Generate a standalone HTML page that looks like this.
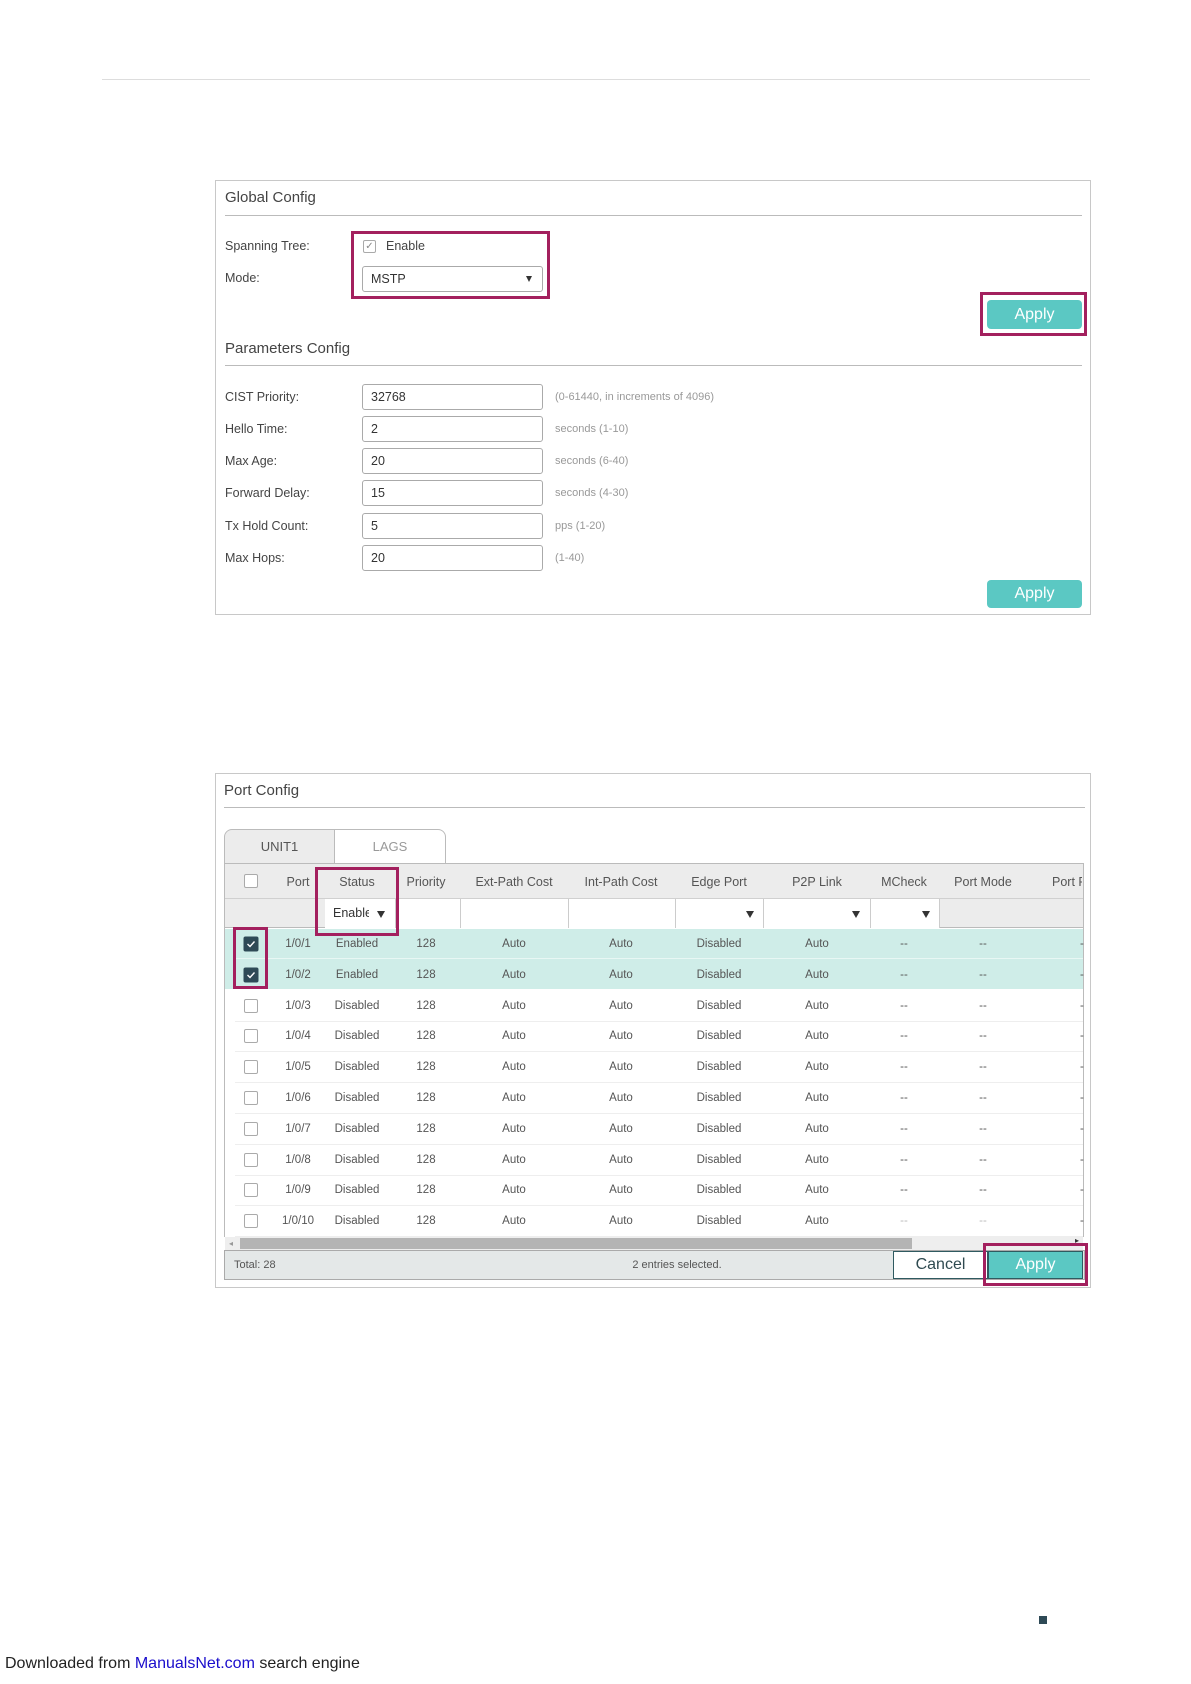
<!DOCTYPE html>
<html><head><meta charset="utf-8"><style>
*{margin:0;padding:0;box-sizing:border-box}
body{width:1191px;height:1684px;background:#fff;position:relative;font-family:"Liberation Sans",sans-serif;color:#333;overflow:hidden}
.a{position:absolute}
.panel{position:absolute;border:1px solid #c8c8c8;background:#fff}
.title{position:absolute;font-size:15px;color:#444}
.hl{position:absolute;height:1px;background:#bbb}
.lbl{position:absolute;font-size:12.5px;color:#444;transform:translateY(-50%)}
.inp{position:absolute;border:1px solid #aaa;border-radius:3px;height:26px;font-size:12.5px;line-height:24px;padding-left:8px;color:#333;background:#fff}
.hint{position:absolute;font-size:11px;color:#999;transform:translateY(-50%)}
.btn{position:absolute;background:#5bc8c3;color:#fff;font-size:16px;text-align:center;border-radius:4px}
.mag{position:absolute;border:3px solid #a3205e}
.c{position:absolute;font-size:11.5px;color:#555;transform:translate(-50%,-50%);white-space:nowrap}
.h{position:absolute;font-size:12.5px;color:#555;transform:translate(-50%,-50%);white-space:nowrap}
.cb{position:absolute;width:14px;height:14px;border:1px solid #aaa;border-radius:2px;background:#fff;transform:translate(-50%,-50%)}
.cbc{position:absolute;width:15px;height:15px;border-radius:2px;background:#2e4a56;transform:translate(-50%,-50%)}
.tri{position:absolute;width:0;height:0;border-left:4px solid transparent;border-right:4px solid transparent;border-top:7px solid #333}
</style></head><body>
<div class="a" style="left:102px;top:79px;width:988px;height:1px;background:#ddd"></div>

<div class="panel" style="left:215px;top:180px;width:876px;height:435px"></div>
<div class="title" style="left:225px;top:189px">Global Config</div>
<div class="hl" style="left:225px;top:215px;width:857px"></div>
<div class="lbl" style="left:225px;top:246px">Spanning Tree:</div>
<div class="lbl" style="left:225px;top:278px">Mode:</div>
<div class="a" style="left:363px;top:240px;width:13px;height:13px;border:1px solid #aaa;border-radius:2px;font-size:10px;line-height:11px;text-align:center;color:#888">✓</div>
<div class="lbl" style="left:386px;top:246px">Enable</div>
<div class="inp" style="left:362px;top:266px;width:181px">MSTP</div>
<div class="tri" style="left:526px;top:276px;border-top-width:6px;border-left-width:3px;border-right-width:3px"></div>
<div class="mag" style="left:351px;top:231px;width:199px;height:68px"></div>
<div class="btn" style="left:987px;top:300px;width:95px;height:29px;line-height:29px">Apply</div>
<div class="mag" style="left:980px;top:292px;width:107px;height:44px"></div>
<div class="title" style="left:225px;top:340px">Parameters Config</div>
<div class="hl" style="left:225px;top:365px;width:857px"></div>

<div class="lbl" style="left:225px;top:397px">CIST Priority:</div>
<div class="inp" style="left:362px;top:384px;width:181px">32768</div>
<div class="hint" style="left:555px;top:397px">(0-61440, in increments of 4096)</div>
<div class="lbl" style="left:225px;top:429px">Hello Time:</div>
<div class="inp" style="left:362px;top:416px;width:181px">2</div>
<div class="hint" style="left:555px;top:429px">seconds (1-10)</div>
<div class="lbl" style="left:225px;top:461px">Max Age:</div>
<div class="inp" style="left:362px;top:448px;width:181px">20</div>
<div class="hint" style="left:555px;top:461px">seconds (6-40)</div>
<div class="lbl" style="left:225px;top:493px">Forward Delay:</div>
<div class="inp" style="left:362px;top:480px;width:181px">15</div>
<div class="hint" style="left:555px;top:493px">seconds (4-30)</div>
<div class="lbl" style="left:225px;top:526px">Tx Hold Count:</div>
<div class="inp" style="left:362px;top:513px;width:181px">5</div>
<div class="hint" style="left:555px;top:526px">pps (1-20)</div>
<div class="lbl" style="left:225px;top:558px">Max Hops:</div>
<div class="inp" style="left:362px;top:545px;width:181px">20</div>
<div class="hint" style="left:555px;top:558px">(1-40)</div>
<div class="btn" style="left:987px;top:580px;width:95px;height:28px;line-height:28px">Apply</div>

<div class="panel" style="left:215px;top:773px;width:876px;height:515px"></div>
<div class="title" style="left:224px;top:782px">Port Config</div>
<div class="hl" style="left:224px;top:807px;width:861px"></div>
<div class="a" style="left:224px;top:829px;width:111px;height:35px;background:#ececec;border:1px solid #bbb;border-bottom:none;border-radius:8px 0 0 0;font-size:13px;line-height:34px;text-align:center;color:#555">UNIT1</div>
<div class="a" style="left:334px;top:829px;width:112px;height:35px;background:#fff;border:1px solid #bbb;border-bottom:none;border-radius:0 8px 0 0;font-size:13px;line-height:34px;text-align:center;color:#999">LAGS</div>
<div class="a" style="left:224px;top:863px;width:860px;height:374px;border-left:1px solid #bbb;border-right:1px solid #bbb;border-top:1px solid #bbb"></div>
<div class="a" style="left:225px;top:864px;width:858px;height:34px;background:#ececec"></div>
<div class="a" style="left:225px;top:898px;width:858px;height:30px;background:#ececec;border-top:1px solid #d0d0d0;border-bottom:1px solid #bbb"></div>
<div class="a" style="left:325px;top:899px;width:71px;height:29px;background:#fff;border-right:1px solid #ccc"></div>
<div class="a" style="left:333px;top:899px;width:36px;height:29px;overflow:hidden;white-space:nowrap;font-size:12.5px;line-height:29px;color:#333">Enable</div>
<div class="tri" style="left:377px;top:911px"></div>
<div class="a" style="left:396px;top:899px;width:65px;height:29px;background:#fff;border-right:1px solid #ccc"></div>
<div class="a" style="left:461px;top:899px;width:108px;height:29px;background:#fff;border-right:1px solid #ccc"></div>
<div class="a" style="left:569px;top:899px;width:107px;height:29px;background:#fff;border-right:1px solid #ccc"></div>
<div class="a" style="left:676px;top:899px;width:88px;height:29px;background:#fff;border-right:1px solid #ccc"></div>
<div class="tri" style="left:746px;top:911px"></div>
<div class="a" style="left:764px;top:899px;width:107px;height:29px;background:#fff;border-right:1px solid #ccc"></div>
<div class="tri" style="left:852px;top:911px"></div>
<div class="a" style="left:871px;top:899px;width:69px;height:29px;background:#fff;border-right:1px solid #ccc"></div>
<div class="tri" style="left:922px;top:911px"></div>
<div class="cb" style="left:251px;top:881px"></div>
<div class="h" style="left:298px;top:882px">Port</div>
<div class="h" style="left:357px;top:882px">Status</div>
<div class="h" style="left:426px;top:882px">Priority</div>
<div class="h" style="left:514px;top:882px">Ext-Path Cost</div>
<div class="h" style="left:621px;top:882px">Int-Path Cost</div>
<div class="h" style="left:719px;top:882px">Edge Port</div>
<div class="h" style="left:817px;top:882px">P2P Link</div>
<div class="h" style="left:904px;top:882px">MCheck</div>
<div class="h" style="left:983px;top:882px">Port Mode</div>
<div class="h" style="left:1052px;top:882px;transform:translate(0,-50%);width:30px;overflow:hidden">Port Role</div>

<div class="a" style="left:225px;top:929px;width:858px;height:60px;background:#cfede8"></div>
<div class="a" style="left:235px;top:958px;width:848px;height:1px;background:#e8f7f4"></div>
<div id="rows"></div>
<script>
var h='';for(var i=0;i<10;i++){var y=944+30.8*i;var en=i<2;
if(en)h+='<div class="cbc" style="left:251px;top:'+y+'px"><svg width="15" height="15" style="position:absolute;left:0;top:0"><path d="M4 7.5l2.5 2.5 4.5-5" stroke="#fff" stroke-width="1.4" fill="none"/></svg></div>';
else h+='<div class="cb" style="left:251px;top:'+y+'px"></div>';
if(i>=2)h+='<div class="a" style="left:235px;top:'+(y+15)+'px;width:848px;height:1px;background:#eee"></div>';
var cells=[[298,'1/0/'+(i+1)],[357,en?'Enabled':'Disabled'],[426,'128'],[514,'Auto'],[621,'Auto'],[719,'Disabled'],[817,'Auto'],[904,'--'],[983,'--']];
cells.forEach(function(c){h+='<div class="c" style="left:'+c[0]+'px;top:'+y+'px'+(i==9&&c[1]=='--'?';color:#bbb':'')+'">'+c[1]+'</div>';});
h+='<div class="c" style="left:1080px;top:'+y+'px;transform:translate(0,-50%)">-</div>';}
document.getElementById('rows').innerHTML=h;
</script>
<div class="a" style="left:225px;top:1237px;width:858px;height:13px;background:#eee"></div>
<div class="a" style="left:240px;top:1238px;width:672px;height:11px;background:#b4b4b4"></div>
<div class="a" style="left:229px;top:1239px;font-size:8px;color:#999">◂</div>
<div class="a" style="left:1075px;top:1236px;font-size:8px;color:#333">▸</div>
<div class="a" style="left:224px;top:1250px;width:861px;height:30px;background:#e4e8e8;border:1px solid #aaa"></div>
<div class="a" style="left:234px;top:1265px;font-size:11px;color:#555;transform:translateY(-50%)">Total: 28</div>
<div class="a" style="left:677px;top:1265px;font-size:11px;color:#555;transform:translate(-50%,-50%)">2 entries selected.</div>
<div class="a" style="left:893px;top:1251px;width:95px;height:28px;background:#fff;border:1px solid #2f5a60;font-size:16px;line-height:26px;text-align:center;color:#2f4a50">Cancel</div>
<div class="a" style="left:988px;top:1251px;width:95px;height:28px;background:#5bc8c3;border:1px solid #2f5a60;font-size:16px;line-height:26px;text-align:center;color:#fff">Apply</div>
<div class="mag" style="left:983px;top:1243px;width:105px;height:43px"></div>
<div class="mag" style="left:315px;top:867px;width:84px;height:69px"></div>
<div class="mag" style="left:233px;top:927px;width:35px;height:62px"></div>

<div class="a" style="left:1039px;top:1616px;width:8px;height:8px;background:#2e4a56"></div>
<div class="a" style="left:5px;top:1655px;font-size:16px;color:#222">Downloaded from <span style="color:#1a0dcc">ManualsNet.com</span> search engine</div>
</body></html>
